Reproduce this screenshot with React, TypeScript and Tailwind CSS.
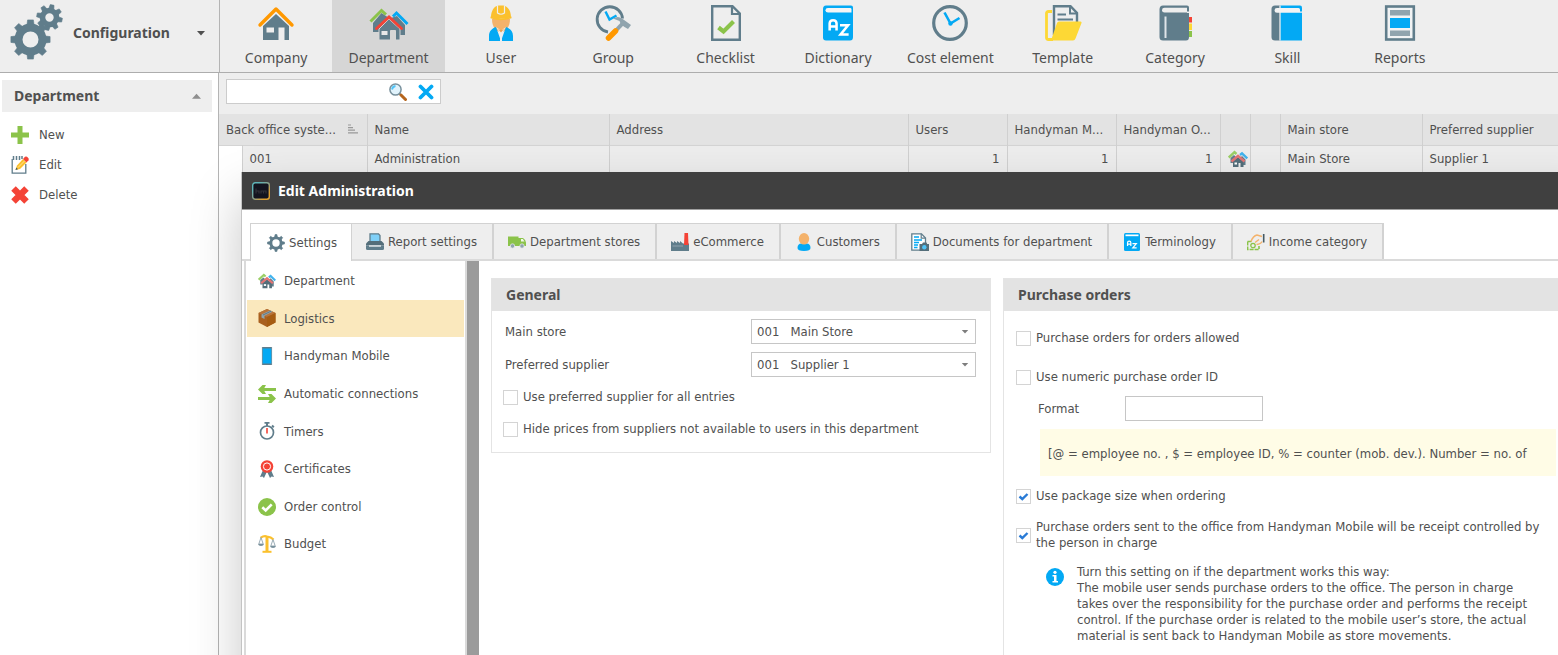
import { ComponentType, ReactNode } from 'react'

interface IconProps {
  className?: string
}

interface NavItem {
  label: string
  Icon: ComponentType<IconProps>
}

const SLATE = '#607d8b'
const BLUE = '#03a9f4'
const GREEN = '#8bc34a'
const RED = '#f44336'
const ORANGE = '#ff9800'
const YELLOW = '#fdd835'

/* ---------- icons ---------- */

interface GearProps {
  cx: number
  cy: number
  body: number
  tooth: number
  hole: number
  width: number
  turn?: number
}

const Gear = ({ cx, cy, body, tooth, hole, width, turn = 0 }: GearProps) => {
  const ring = (body + hole) / 2
  return (
    <g>
      <circle cx={cx} cy={cy} r={ring} fill="none" stroke={SLATE} strokeWidth={body - hole} />
      {[0, 45, 90, 135, 180, 225, 270, 315].map((a) => (
        <path
          key={a}
          d={`M${cx - width / 2} ${cy - body + 1} L${cx - width / 2 + 0.6} ${cy - tooth} H${
            cx + width / 2 - 0.6
          } L${cx + width / 2} ${cy - body + 1}Z`}
          fill={SLATE}
          stroke={SLATE}
          strokeWidth="0.6"
          strokeLinejoin="round"
          transform={`rotate(${a + turn} ${cx} ${cy})`}
        />
      ))}
    </g>
  )
}

const GearsIcon = ({ className }: IconProps) => (
  <svg viewBox="0 0 54 58" className={className} aria-hidden="true">
    <Gear cx={20.5} cy={35.5} body={16} tooth={19.6} hole={8} width={7} />
    <Gear cx={39.5} cy={13.5} body={9.8} tooth={12.8} hole={4.2} width={5} turn={12} />
  </svg>
)

const CogIcon = ({ className }: IconProps) => (
  <svg viewBox="0 0 18 18" className={className} aria-hidden="true">
    <Gear cx={9} cy={9} body={6.6} tooth={8.5} hole={3.7} width={3} />
  </svg>
)

const HouseIcon = ({ className }: IconProps) => (
  <svg viewBox="0 0 36 36" className={className} aria-hidden="true">
    <path d="M18 9 L31 21 V35 H26.5 V22.500 H20.500 V35 H5 V21Z" fill={SLATE} />
    <rect x="8.500" y="22.500" width="7.500" height="5" fill="#eeeeee" />
    <path d="M2 20 L18 4 L34 20" fill="none" stroke={ORANGE} strokeWidth="3.400" strokeLinejoin="round" strokeLinecap="round" />
  </svg>
)

const HousesIcon = ({ className }: IconProps) => (
  <svg viewBox="0 0 40 36" className={className} aria-hidden="true">
    <path d="M12.500 8 L20 13 L12 22 V27 H4 V18Z" fill={SLATE} />
    <path d="M28 11 L36 20 V30 H29 V23 L22 13Z" fill={SLATE} />
    <path d="M1.500 16.500 L12.500 5.500 L17 9.500" fill="none" stroke={GREEN} strokeWidth="3" />
    <path d="M24 11.500 L27.500 8 L38.500 19" fill="none" stroke={BLUE} strokeWidth="3" />
    <path d="M20 14 L31 24 V35 H26.500 V25.500 H21.500 V35 H10 V24Z" fill={SLATE} stroke="#d6d6d6" strokeWidth="1" />
    <rect x="12.500" y="26" width="6" height="4" fill="#e8e8e8" />
    <path d="M7.500 23.500 L20 12 L32.500 23.500" fill="none" stroke={RED} strokeWidth="2.800" strokeLinecap="round" />
  </svg>
)

const SmallHousesIcon = ({ className }: IconProps) => (
  <svg viewBox="0 0 20 18" className={className} aria-hidden="true">
    <path d="M6 5 L9 8 L5 13 H2.500 V8Z M14 6 L17.500 9.500 V15 H15 L12 8Z" fill={SLATE} />
    <path d="M.8 7.500 L6.500 2.200 L8.500 4" fill="none" stroke="#9bcf66" strokeWidth="2.400" />
    <path d="M12 5 L14 3.400 L19.200 8.500" fill="none" stroke="#42b3ee" strokeWidth="2.400" />
    <path d="M10 7 L15.500 12 V17 H12.500 V13 H10.500 V17 H5 V12Z" fill="#546e7a" />
    <rect x="6.500" y="12.500" width="2.500" height="2" fill="#fff" />
    <path d="M3.500 11.500 L10 5.800 L16.500 11.500" fill="none" stroke="#e57373" strokeWidth="2.400" />
  </svg>
)

const WorkerIcon = ({ className }: IconProps) => (
  <svg viewBox="0 0 36 36" className={className} aria-hidden="true">
    <path d="M9 14 C9 23 14 27 18 27 C22 27 27 23 27 14Z" fill="#f4b26b" />
    <path d="M6 36 V31 C6 26 9 23.500 13 22 L18 36Z M30 36 V31 C30 26 27 23.500 23 22 L18 36Z" fill={BLUE} />
    <path d="M13 22 L17 28 V36 H19 V28 L23 22 L18 25.500Z" fill="#eceff1" />
    <path d="M14.500 23.500 C16 25.300 20 25.300 21.500 23.500 L18 27.500Z" fill="#ec9f55" />
    <path d="M8 12.500 C8 5.500 11.500 1.500 14 1 L15.500 0.500 H20.500 L22 1 C25 2 28 6 28 12.500 Q18 14.500 8 12.500Z" fill="#fbc02d" />
    <path d="M14.500 0.500 V8 Q18 10.500 21.500 8 V0.500" fill="none" stroke="#eeeeee" strokeWidth="1.200" />
    <path d="M7.500 11.500 Q18 15 28.500 11.500 V13.300 Q18 17 7.500 13.300Z" fill="#fbc02d" />
  </svg>
)

const ClockHammerIcon = ({ className }: IconProps) => (
  <svg viewBox="0 0 36 36" className={className} aria-hidden="true">
    <path d="M27.500 13.500 A12.700 12.700 0 1 0 13 27" fill="none" stroke={SLATE} strokeWidth="2.800" />
    <path d="M10.500 6.500 L14.500 14.500 L21.500 10.500" fill="none" stroke={BLUE} strokeWidth="2.400" />
    <path d="M29 17 L20.500 26" stroke="#90a4ae" strokeWidth="4" />
    <path d="M18 13.500 Q23 10.500 27 13.500 L36 20 L33 24 L29.500 22 L26 19.500 L24.500 16Z" fill="#90a4ae" />
    <path d="M20.500 26 L13.500 33" stroke={ORANGE} strokeWidth="5.500" strokeLinecap="round" />
  </svg>
)

const ChecklistIcon = ({ className }: IconProps) => (
  <svg viewBox="0 0 36 36" className={className} aria-hidden="true">
    <path d="M4.200 1.200 H24.500 L31.800 8.500 V34.800 H4.200Z" fill="none" stroke={SLATE} strokeWidth="2.400" />
    <path d="M24 1 V9 H32" fill="none" stroke={SLATE} strokeWidth="2.200" />
    <path d="M10.500 22.500 L15.500 26.500 L25.500 16.500" fill="none" stroke={GREEN} strokeWidth="4.200" />
  </svg>
)

const LetterPair = ({ x, y, size }: { x: number; y: number; size: number }) => (
  <g transform={`translate(${x} ${y}) scale(${size})`} fill="none" stroke="#fff" strokeWidth="2.200">
    <path d="M1 10 V4 Q1 1 4 1 Q7 1 7 4 V10 M1 6.500 H7" />
    <path d="M10 5.500 H17 L10.500 13.500 H17.500" />
  </g>
)

const DictionaryIcon = ({ className }: IconProps) => (
  <svg viewBox="0 0 36 36" className={className} aria-hidden="true">
    <path d="M6 0.500 H31 Q33 .5 33 2.500 V32 Q33 35.500 30 35.500 H6 Q3 35.500 3 32.500 V4 Q3 .5 6 .5Z" fill={BLUE} />
    <path d="M8 3 H30.500 Q31.500 3 31.500 4.500 V7.500 H8 Q5.500 7.500 5.500 5.200 Q5.500 3 8 3Z" fill="#f5f5f5" />
    <LetterPair x={8.500} y={14} size={1.150} />
  </svg>
)

const SmallDictionaryIcon = ({ className }: IconProps) => (
  <svg viewBox="0 0 18 18" className={className} aria-hidden="true">
    <rect x="1" y="0" width="16" height="18" rx="1.500" fill={BLUE} />
    <path d="M2.500 1.500 H15.500 V3.200 H2.500Z" fill="#fff" />
    <LetterPair x={4} y={7.500} size={0.550} />
  </svg>
)

const ClockIcon = ({ className }: IconProps) => (
  <svg viewBox="0 0 36 36" className={className} aria-hidden="true">
    <circle cx="18" cy="18" r="16.300" fill="none" stroke={SLATE} strokeWidth="3.200" />
    <path d="M12.500 7.500 L18.500 18.500 L27.500 13" fill="none" stroke={BLUE} strokeWidth="2.600" />
    <circle cx="18.500" cy="18.500" r="2.200" fill={BLUE} />
  </svg>
)

const TemplateIcon = ({ className }: IconProps) => (
  <svg viewBox="0 0 38 36" className={className} aria-hidden="true">
    <path d="M8 6.500 H4.500 Q2.500 6.500 2.500 8.500 V32.500 Q2.500 34.500 4.500 34.500 H9" fill="none" stroke={YELLOW} strokeWidth="2.800" />
    <path d="M10 30 V1.200 H26.500 L33 8 V18" fill="#eeeeee" stroke={SLATE} strokeWidth="2.400" />
    <path d="M26 1 V8.500 H33" fill="none" stroke={SLATE} strokeWidth="2" />
    <path d="M13.500 9.500 H22 M13.500 14.500 H29" stroke={SLATE} strokeWidth="2" />
    <path d="M13 18 Q13.500 16.500 15 16.500 H36.500 Q38 16.500 37.500 18 L31.500 33.500 Q30.800 35.500 29 35.500 H7Z" fill={YELLOW} />
  </svg>
)

const CategoryIcon = ({ className }: IconProps) => (
  <svg viewBox="0 0 36 36" className={className} aria-hidden="true">
    <path d="M31 12 H35 V17.500 H31Z" fill={RED} />
    <path d="M31 18.500 H35 V25 H31Z" fill="#fdd835" />
    <path d="M31 26 H35 V32 H31Z" fill={GREEN} />
    <path d="M6 .5 H30 Q32 .5 32 2.500 V32 Q32 35.500 29 35.500 H6 Q2.500 35.500 2.500 32 V4.500 Q2.500 .5 6 .5Z" fill={SLATE} />
    <path d="M7.500 2.800 H30 V7.500 H7.500 Q5 7.500 5 5.200 Q5 2.800 7.500 2.800Z" fill="#eeeeee" />
    <path d="M30 6.500 H33 V8 H30Z" fill="#eeeeee" />
    <path d="M7.500 11.500 H9.500 V33 H7.500Z" fill="#dfe5e8" />
  </svg>
)

const SkillIcon = ({ className }: IconProps) => (
  <svg viewBox="0 0 36 36" className={className} aria-hidden="true">
    <path d="M11 .5 H31 Q33 .5 33 2.500 V35.500 H11Z" fill={BLUE} />
    <path d="M11 .5 V35.500 H6 Q2.500 35.500 2.500 32 V4 Q2.500 .5 6 .5Z" fill={SLATE} />
    <path d="M11 .5 V35.500" stroke="#eeeeee" strokeWidth="1.300" />
    <path d="M8 3 H29.500 Q31 3 31 4.500 V6.500 H33 V7.800 H8 Q5.500 7.800 5.500 5.400 Q5.500 3 8 3Z" fill="#f3f3f3" />
  </svg>
)

const ReportsIcon = ({ className }: IconProps) => (
  <svg viewBox="0 0 36 36" className={className} aria-hidden="true">
    <rect x="4.200" y="1.500" width="27.600" height="33" fill="#f1f3f4" stroke={SLATE} strokeWidth="2.600" />
    <path d="M8 5 H28 V10.500 H8Z M8 25.500 H28 V31 H8Z" fill="#90a4ae" />
    <path d="M8 13 H28 V23 H8Z" fill={BLUE} />
  </svg>
)

const PlusIcon = ({ className }: IconProps) => (
  <svg viewBox="0 0 18 18" className={className} aria-hidden="true">
    <path d="M9 0 V18 M0 9 H18" stroke={GREEN} strokeWidth="5" />
  </svg>
)

const NotepadIcon = ({ className }: IconProps) => (
  <svg viewBox="0 0 18 18" className={className} aria-hidden="true">
    <path d="M1.200 3 V17.200 H14.800 V8" fill="#fff" stroke={SLATE} strokeWidth="1.300" />
    <path d="M2.500 0 V4 M5.500 0 V4 M8.500 0 V4 M11 0 V3" stroke={SLATE} strokeWidth="1.500" />
    <path d="M4.500 14 L6 9.500 L12 3 L15.500 6.500 L9 13Z" fill="#fbc02d" />
    <path d="M4.500 14 L5.300 11.500 L7 13.200Z" fill="#455a64" />
    <path d="M7 11.500 L13.500 5" stroke="#ffe49a" strokeWidth="1" />
    <path d="M12 3 L14 .8 Q15 0 16 .8 L17.500 2.300 Q18 3.300 17.500 4.300 L15.500 6.500Z" fill={RED} />
  </svg>
)

const CrossIcon = ({ className }: IconProps) => (
  <svg viewBox="0 0 18 18" className={className} aria-hidden="true">
    <path d="M2.500 2.500 L15.500 15.500 M15.500 2.500 L2.500 15.500" stroke={RED} strokeWidth="6.400" />
  </svg>
)

const SearchIcon = ({ className }: IconProps) => (
  <svg viewBox="0 0 18 18" className={className} aria-hidden="true">
    <circle cx="6.500" cy="6.500" r="5.600" fill="#e1f3fc" stroke="#78909c" strokeWidth="1.500" />
    <path d="M3 6.500 Q3.500 3.500 6.500 3" fill="none" stroke="#4fc3f7" strokeWidth="1.800" />
    <path d="M10.500 10.500 L12 12" stroke="#78909c" strokeWidth="2" />
    <path d="M12 12 L16.500 16.500" stroke="#b5651d" strokeWidth="3" strokeLinecap="round" />
  </svg>
)

const ClearIcon = ({ className }: IconProps) => (
  <svg viewBox="0 0 16 16" className={className} aria-hidden="true">
    <path d="M2.500 2.500 L13.500 13.500 M13.500 2.500 L2.500 13.500" stroke={BLUE} strokeWidth="3.800" strokeLinecap="round" />
  </svg>
)

const SortIcon = ({ className }: IconProps) => (
  <svg viewBox="0 0 10 10" className={className} aria-hidden="true">
    <path d="M0 1 H3 M0 3.600 H5 M0 6.200 H7 M0 8.800 H10" stroke="#999" strokeWidth="1.200" />
  </svg>
)

const CaretIcon = ({ className }: IconProps) => (
  <svg viewBox="0 0 8 5" className={className} aria-hidden="true">
    <path d="M0 0 H8 L4 4.500Z" fill="currentColor" />
  </svg>
)

const AppIcon = ({ className }: IconProps) => (
  <svg viewBox="0 0 18 18" className={className} aria-hidden="true">
    <defs>
      <linearGradient id="app-frame" x1="0" y1="0" x2="1" y2="1">
        <stop offset="0.2" stopColor="#5fb4b8" />
        <stop offset="0.500" stopColor="#8aa08a" />
        <stop offset="0.800" stopColor="#e0a030" />
      </linearGradient>
    </defs>
    <rect x="0.700" y="0.700" width="16.600" height="16.600" rx="2.500" fill="#14141f" stroke="url(#app-frame)" strokeWidth="1.400" />
    <path d="M4 6.500 V11.500 M4 9 H7 V11.500 M9 11.500 V9 H11.500 V11.500 M11.500 9 H14 V11.500" fill="none" stroke="#33323a" strokeWidth="1.200" />
  </svg>
)

const PrinterIcon = ({ className }: IconProps) => (
  <svg viewBox="0 0 18 18" className={className} aria-hidden="true">
    <path d="M4 9 V.8 H12.500 L14 2.500 V9" fill="#7fd0f8" stroke={SLATE} strokeWidth="1.300" />
    <path d="M2.500 8 H15.500 L18 10.500 V12.500 H0 V10.500Z" fill="#546e7a" />
    <path d="M0 12.500 H18 V15.500 Q18 17 16.500 17 H1.500 Q0 17 0 15.500Z" fill={SLATE} />
    <path d="M3 13 H15" stroke="#fff" strokeWidth="1.200" />
  </svg>
)

const TruckIcon = ({ className }: IconProps) => (
  <svg viewBox="0 0 18 18" className={className} aria-hidden="true">
    <path d="M0 3.500 H10.500 V13 H0Z M10.500 5 H15 Q18 7 18 9.500 V13 H10.500Z" fill={GREEN} />
    <path d="M13 6 H14.800 L16.500 8.500 H13Z" fill="#f1f8e9" />
    <circle cx="4.500" cy="13" r="2.200" fill="#90a4ae" stroke="#eee" strokeWidth="0.700" />
    <circle cx="14" cy="13" r="2.200" fill="#90a4ae" stroke="#eee" strokeWidth="0.700" />
  </svg>
)

const FactoryIcon = ({ className }: IconProps) => (
  <svg viewBox="0 0 18 18" className={className} aria-hidden="true">
    <path d="M0 18 V8 L3 10 V8 L6 10 V8 L9 10 V8 L12 10.500 H18 V18Z" fill={SLATE} />
    <path d="M13.500 0 H17 L17.500 12 H13Z" fill={RED} />
    <path d="M1.500 13 H12" stroke="#90a4ae" strokeWidth="1" />
  </svg>
)

const PersonIcon = ({ className }: IconProps) => (
  <svg viewBox="0 0 18 18" className={className} aria-hidden="true">
    <path d="M2.500 15 Q2.500 10.500 6.500 10.500 H11.500 Q15.500 10.500 15.500 15 Q15.500 18 9 18 Q2.500 18 2.500 15Z" fill={BLUE} />
    <ellipse cx="9" cy="5.800" rx="5.200" ry="5.800" fill="#f4b26b" />
  </svg>
)

const DocumentsIcon = ({ className }: IconProps) => (
  <svg viewBox="0 0 18 18" className={className} aria-hidden="true">
    <path d="M.8 .8 H10.500 L14.500 5 V17.200 H.8Z" fill="#fff" stroke={SLATE} strokeWidth="1.300" />
    <path d="M10.200 .8 V5.200 H14.500" fill="none" stroke={SLATE} strokeWidth="1.200" />
    <path d="M3 4 H8 M3 7 H11 M3 9.500 H8 M3 12 H7 M3 14.500 H6.500" stroke={BLUE} strokeWidth="1.300" />
    <path d="M8.500 11 H11 L12 9.500 H15.500 L16.200 11 H18 V18 H8.500Z" fill="#546e7a" />
    <circle cx="13.300" cy="14.300" r="2.200" fill="#4fc3f7" />
  </svg>
)

const IncomeIcon = ({ className }: IconProps) => (
  <svg viewBox="0 0 18 18" className={className} aria-hidden="true">
    <path d="M.6 8.500 H5 M.6 8.500 V16.500 H12 V13" fill="none" stroke={GREEN} strokeWidth="1.600" strokeDasharray="4 1" />
    <circle cx="6" cy="12.500" r="2.200" fill="none" stroke={GREEN} strokeWidth="1.300" />
    <path d="M4 8.500 Q6 3 10 2 L15 3.500 M8 9.500 L12 6.500 M9.500 11.500 Q14 11 15 8.500" fill="none" stroke="#f4b26b" strokeWidth="1.400" />
    <path d="M16.700 1 V9.500" stroke="#455a64" strokeWidth="1.600" />
  </svg>
)

const BoxIcon = ({ className }: IconProps) => (
  <svg viewBox="0 0 18 18" className={className} aria-hidden="true">
    <path d="M9 0 L17.500 4 V13.500 L9 18 L.5 13.500 V4Z" fill="#a9601f" />
    <path d="M.5 4 L9 8 L17.500 4 L9 0Z" fill="#b9743a" />
    <path d="M9 8 V18 L17.500 13.500 V4Z" fill="#a65c12" />
    <path d="M3.500 5.400 L12 1.500 L14.500 2.700 L6.500 6.700 V10 L3.500 8.500Z" fill="#90a4ae" />
    <path d="M5 6 L13.200 2.100" stroke="#546e7a" strokeWidth="0.800" />
  </svg>
)

const PhoneIcon = ({ className }: IconProps) => (
  <svg viewBox="0 0 18 18" className={className} aria-hidden="true">
    <rect x="4" y="0" width="10" height="18" fill={BLUE} />
    <path d="M4 .8 H14 M4 17.200 H14" stroke={SLATE} strokeWidth="1.600" />
    <path d="M4.400 0 V18 M13.600 0 V18" stroke="#78909c" strokeWidth="0.800" />
  </svg>
)

const SwapIcon = ({ className }: IconProps) => (
  <svg viewBox="0 0 18 18" className={className} aria-hidden="true">
    <path d="M3 4.500 H18 M0 13.500 H15" stroke={GREEN} strokeWidth="3" />
    <path d="M0 4.500 L4.500 0 H8 L5.500 4.500 L8 9 H4.500Z M18 13.500 L13.500 9 H10 L12.500 13.500 L10 18 H13.500Z" fill={GREEN} />
  </svg>
)

const TimerIcon = ({ className }: IconProps) => (
  <svg viewBox="0 0 18 18" className={className} aria-hidden="true">
    <circle cx="9" cy="10.500" r="6.500" fill="#fff" stroke={SLATE} strokeWidth="1.700" />
    <path d="M6.500 .8 H11.500 M9 0 V4 M14 3.500 L15.800 5.300" stroke={SLATE} strokeWidth="2" />
    <path d="M9 6 V11.500" stroke={RED} strokeWidth="1.600" />
  </svg>
)

const RosetteIcon = ({ className }: IconProps) => (
  <svg viewBox="0 0 18 18" className={className} aria-hidden="true">
    <path d="M5 10 L2 17 L4.500 16.500 L6 18 L9 11.500 L12 18 L13.500 16.500 L16 17 L13 10Z" fill={SLATE} />
    <circle cx="9" cy="6.500" r="6.300" fill={RED} />
    <circle cx="9" cy="6.500" r="3.600" fill="none" stroke="#fff" strokeWidth="1" />
  </svg>
)

const CheckCircleIcon = ({ className }: IconProps) => (
  <svg viewBox="0 0 18 18" className={className} aria-hidden="true">
    <circle cx="9" cy="9" r="9" fill={GREEN} />
    <path d="M4.300 9.200 L7.700 12.500 L13.700 6.300" fill="none" stroke="#fff" strokeWidth="2.600" />
  </svg>
)

const ScalesIcon = ({ className }: IconProps) => (
  <svg viewBox="0 0 18 18" className={className} aria-hidden="true">
    <path d="M2.500 2.800 Q6 .5 9 1.500 Q13 2 15.500 4.500" fill="none" stroke="#fbc02d" strokeWidth="2.200" />
    <path d="M9 1.500 V17" stroke="#fbc02d" strokeWidth="3" />
    <path d="M4.500 16.800 H13.500" stroke="#fbc02d" strokeWidth="2" />
    <path d="M3 2.500 L.8 9 H5.200Z M15 4.500 L12.800 11 H17.200Z" fill="#fff" stroke="#90a4ae" strokeWidth="0.900" />
    <path d="M0 9 H6 Q5.500 11 3 11 Q.5 11 0 9Z M12 11 H18 Q17.500 13 15 13 Q12.500 13 12 11Z" fill="#78909c" />
  </svg>
)

const InfoIcon = ({ className }: IconProps) => (
  <svg viewBox="0 0 18 18" className={className} aria-hidden="true">
    <circle cx="9" cy="9" r="9" fill={BLUE} />
    <circle cx="9" cy="4.300" r="1.600" fill="#fff" />
    <path d="M6.500 7 H10.500 V13 H12 V14.500 H6.500 V13 H8 V8.500 H6.500Z" fill="#fff" />
  </svg>
)

/* ---------- data ---------- */

const toolbarItems: NavItem[] = [
  { label: 'Company', Icon: HouseIcon },
  { label: 'Department', Icon: HousesIcon },
  { label: 'User', Icon: WorkerIcon },
  { label: 'Group', Icon: ClockHammerIcon },
  { label: 'Checklist', Icon: ChecklistIcon },
  { label: 'Dictionary', Icon: DictionaryIcon },
  { label: 'Cost element', Icon: ClockIcon },
  { label: 'Template', Icon: TemplateIcon },
  { label: 'Category', Icon: CategoryIcon },
  { label: 'Skill', Icon: SkillIcon },
  { label: 'Reports', Icon: ReportsIcon },
]

const actions: NavItem[] = [
  { label: 'New', Icon: PlusIcon },
  { label: 'Edit', Icon: NotepadIcon },
  { label: 'Delete', Icon: CrossIcon },
]

const tabs: NavItem[] = [
  { label: 'Settings', Icon: CogIcon },
  { label: 'Report settings', Icon: PrinterIcon },
  { label: 'Department stores', Icon: TruckIcon },
  { label: 'eCommerce', Icon: FactoryIcon },
  { label: 'Customers', Icon: PersonIcon },
  { label: 'Documents for department', Icon: DocumentsIcon },
  { label: 'Terminology', Icon: SmallDictionaryIcon },
  { label: 'Income category', Icon: IncomeIcon },
]

const sections: NavItem[] = [
  { label: 'Department', Icon: SmallHousesIcon },
  { label: 'Logistics', Icon: BoxIcon },
  { label: 'Handyman Mobile', Icon: PhoneIcon },
  { label: 'Automatic connections', Icon: SwapIcon },
  { label: 'Timers', Icon: TimerIcon },
  { label: 'Certificates', Icon: RosetteIcon },
  { label: 'Order control', Icon: CheckCircleIcon },
  { label: 'Budget', Icon: ScalesIcon },
]

/* ---------- page parts ---------- */

const TopBar = () => (
  <header className="flex h-[73px] border-b border-[#adadad] bg-[#eeeeee]">
    <button
      type="button"
      className="flex w-[220px] shrink-0 items-center border-r border-[#b4b4b4] pr-[14px] pb-[6px] pl-[10px] font-['Noto_Sans',sans-serif] text-sm font-bold"
    >
      <GearsIcon className="h-[58px] w-[54px]" />
      <span className="ml-[9px] flex-1 text-left">Configuration</span>
      <CaretIcon className="h-[5px] w-2" />
    </button>
    <nav className="grid w-[1236px] shrink-0 grid-cols-11">
      {toolbarItems.map(({ label, Icon }) => (
        <button
          key={label}
          type="button"
          className={`flex flex-col items-center pt-[5px] font-['Noto_Sans',sans-serif] text-sm ${
            label === 'Department' ? 'bg-[#d6d6d6]' : ''
          }`}
        >
          <Icon className="h-9 w-10" />
          <span className="mt-[7px] whitespace-nowrap">{label}</span>
        </button>
      ))}
    </nav>
  </header>
)

const SideBar = () => (
  <aside className="w-[219px] shrink-0 border-r border-[#b4b4b4] bg-white pt-[7px]">
    <button
      type="button"
      className="ml-[2px] flex h-8 w-[210px] items-center bg-[#eeeeee] pr-[11px] pl-3 font-['Noto_Sans',sans-serif] text-sm font-bold"
    >
      <span className="flex-1 text-left">Department</span>
      <CaretIcon className="h-[6px] w-[9px] rotate-180 text-[#8e8e8e]" />
    </button>
    <ul className="mt-2">
      {actions.map(({ label, Icon }) => (
        <li key={label}>
          <button type="button" className="flex h-[30px] items-center gap-[10px] pl-[11px]">
            <Icon className="h-[18px] w-[18px]" />
            {label}
          </button>
        </li>
      ))}
    </ul>
  </aside>
)

const HeadCell = ({ children, colSpan }: { children?: ReactNode; colSpan?: number }) => (
  <th colSpan={colSpan} scope="col" className="truncate border-r border-[#d0d0d0] px-[7px] text-left font-normal last:border-r-0">
    {children}
  </th>
)

const Cell = ({ children, right }: { children?: ReactNode; right?: boolean }) => (
  <td className={`border-r border-[#d0d0d0] px-[7px] last:border-r-0 ${right ? 'text-right' : ''}`}>{children}</td>
)

const DepartmentTable = () => (
  <table className="w-full table-fixed border-collapse">
    <colgroup>
      <col className="w-[23px]" />
      <col className="w-[125px]" />
      <col className="w-[242px]" />
      <col className="w-[299px]" />
      <col className="w-[99px]" />
      <col className="w-[109px]" />
      <col className="w-[104px]" />
      <col className="w-[30px]" />
      <col className="w-[30px]" />
      <col className="w-[142px]" />
      <col />
    </colgroup>
    <thead>
      <tr className="h-[31px] border-b border-[#d4d4d4] bg-[#e3e3e3]">
        <HeadCell colSpan={2}>
          <span className="flex items-center gap-3">
            Back office syste...
            <SortIcon className="h-[10px] w-[10px]" />
          </span>
        </HeadCell>
        <HeadCell>Name</HeadCell>
        <HeadCell>Address</HeadCell>
        <HeadCell>Users</HeadCell>
        <HeadCell>Handyman M...</HeadCell>
        <HeadCell>Handyman O...</HeadCell>
        <HeadCell />
        <HeadCell />
        <HeadCell>Main store</HeadCell>
        <HeadCell>Preferred supplier</HeadCell>
      </tr>
    </thead>
    <tbody>
      <tr className="h-[27px] bg-[#ededed]">
        <td className="border-r border-[#d0d0d0] bg-white" />
        <Cell>001</Cell>
        <Cell>Administration</Cell>
        <Cell />
        <Cell right>1</Cell>
        <Cell right>1</Cell>
        <Cell right>1</Cell>
        <Cell>
          <SmallHousesIcon className="h-[18px] w-5" />
        </Cell>
        <Cell />
        <Cell>Main Store</Cell>
        <Cell>Supplier 1</Cell>
      </tr>
    </tbody>
  </table>
)

const Panel = ({ title, className, children }: { title: string; className: string; children: ReactNode }) => (
  <section className={`border border-[#e4e4e4] ${className}`}>
    <h2 className="flex h-8 items-center bg-[#e3e3e3] px-[14px] font-['Noto_Sans',sans-serif] text-sm font-bold">
      {title}
    </h2>
    {children}
  </section>
)

const CheckField = ({ label, checked, className }: { label: string; checked?: boolean; className: string }) => (
  <label className={`flex items-center gap-[5px] leading-4 ${className}`}>
    <span className="relative h-[15px] w-[15px] shrink-0">
      <input
        type="checkbox"
        defaultChecked={checked}
        className="peer block h-[15px] w-[15px] appearance-none border border-[#d4d4d4] bg-white"
      />
      <svg viewBox="0 0 15 15" className="pointer-events-none absolute inset-0 hidden peer-checked:block" aria-hidden="true">
        <path d="M3.500 7.500 L6.300 10 L11.500 5" fill="none" stroke="#2a7bd6" strokeWidth="2.400" />
      </svg>
    </span>
    {label}
  </label>
)

const SelectField = ({ id, label, value }: { id: string; label: string; value: string }) => (
  <div className="flex h-[25px] items-center justify-between">
    <label htmlFor={id}>{label}</label>
    <span className="relative w-[225px]">
      <select
        id={id}
        defaultValue={value}
        className="block h-[25px] w-full appearance-none border border-[#c6c6c6] bg-white pl-[5px] whitespace-pre"
      >
        <option value={value}>{value}</option>
      </select>
      <CaretIcon className="pointer-events-none absolute top-[11px] right-[7px] h-1 w-2 text-[#7d7d7d]" />
    </span>
  </div>
)

const GeneralPanel = () => (
  <Panel title="General" className="h-[175px] w-[500px] shrink-0">
    <div className="flex flex-col gap-2 pt-2 pr-[14px] pl-[13px]">
      <SelectField id="main-store" label="Main store" value={'001\u00a0\u00a0\u00a0Main Store'} />
      <SelectField id="preferred-supplier" label="Preferred supplier" value={'001\u00a0\u00a0\u00a0Supplier 1'} />
      <CheckField className="-ml-[2px] h-6" label="Use preferred supplier for all entries" />
      <CheckField className="-ml-[2px] h-6" label="Hide prices from suppliers not available to users in this department" />
    </div>
  </Panel>
)

const PurchasePanel = () => (
  <Panel title="Purchase orders" className="min-w-0 flex-1 border-r-0 border-b-0">
    <div className="pl-3">
      <CheckField className="mt-[15px] h-6" label="Purchase orders for orders allowed" />
      <CheckField className="mt-[15px] h-6" label="Use numeric purchase order ID" />
      <div className="mt-[7px] flex h-[25px] items-center pl-[22px]">
        <label htmlFor="id-format" className="w-[87px]">
          Format
        </label>
        <input id="id-format" type="text" className="h-[25px] w-[138px] border border-[#c6c6c6] px-[6px]" />
      </div>
      <p className="mt-2 mr-[2px] ml-6 flex h-[47px] items-center overflow-hidden bg-[#fffce6] pt-[3px] pl-2 whitespace-nowrap">
        [@ = employee no. , $ = employee ID, % = counter (mob. dev.). Number = no. of
      </p>
      <CheckField className="mt-2 h-6" checked label="Use package size when ordering" />
      <CheckField
        className="mt-[11px] h-8"
        checked
        label="Purchase orders sent to the office from Handyman Mobile will be receipt controlled by the person in charge"
      />
      <div className="mt-[13px] flex gap-[13px] pl-[30px] leading-4">
        <InfoIcon className="mt-1 h-[18px] w-[18px] shrink-0" />
        <p className="max-w-[460px]">
          Turn this setting on if the department works this way:
          <br />
          The mobile user sends purchase orders to the office. The person in charge takes over the responsibility for the
          purchase order and performs the receipt control. If the purchase order is related to the mobile user’s store,
          the actual material is sent back to Handyman Mobile as store movements.
        </p>
      </div>
    </div>
  </Panel>
)

const TabBar = () => (
  <div role="tablist" className="mt-[13px] flex h-[38px] items-end border-b-2 border-[#dadada] pl-2">
    {tabs.map(({ label, Icon }) => (
      <button
        key={label}
        type="button"
        role="tab"
        aria-selected={label === 'Settings'}
        className={`flex items-center gap-1 border-[#d2d2d2] whitespace-nowrap ${
          label === 'Settings'
            ? '-mb-[2px] h-[38px] border-x border-t bg-white pr-[14px] pl-4'
            : 'h-9 border-t border-r-2 bg-[#eeeeee] pr-[15px] pl-[14px]'
        }`}
      >
        <Icon className="h-[18px] w-[18px]" />
        {label}
      </button>
    ))}
  </div>
)

const EditDialog = () => (
  <div
    role="dialog"
    aria-labelledby="dialog-title"
    className="absolute top-[99px] right-0 bottom-0 left-[22px] flex flex-col overflow-hidden border-l border-[#c4c4c4] bg-white"
  >
    <div className="flex h-[38px] shrink-0 items-center gap-2 border-b border-[#a0a0a0] bg-[#404040] pl-[10px] text-white">
      <AppIcon className="h-[18px] w-[18px]" />
      <h1 id="dialog-title" className="font-['Noto_Sans',sans-serif] text-sm font-bold">
        Edit Administration
      </h1>
    </div>
    <TabBar />
    <div className="flex min-h-0 flex-1 pl-[2px]">
      <nav className="w-[223px] shrink-0 border-x-2 border-[#dadada] pt-px">
        <ul className="grid h-[301px] grid-rows-8">
          {sections.map(({ label, Icon }) => (
            <li key={label} className="px-[1px]">
              <button
                type="button"
                className={`flex h-full w-full items-center gap-2 pl-[11px] ${label === 'Logistics' ? 'bg-[#fae8bd]' : ''}`}
              >
                <Icon className="h-[18px] w-[18px]" />
                {label}
              </button>
            </li>
          ))}
        </ul>
      </nav>
      <div className="w-3 shrink-0 bg-[#9b9b9b]" />
      <div className="flex min-w-0 flex-1 gap-3 pt-[17px] pl-3">
        <GeneralPanel />
        <PurchasePanel />
      </div>
    </div>
  </div>
)

export default function App() {
  return (
    <div className="flex h-screen flex-col overflow-hidden bg-white font-['DejaVu_Sans_Condensed',sans-serif] text-[13px] text-[#505050]">
      <TopBar />
      <div className="flex min-h-0 flex-1">
        <SideBar />
        <main className="relative min-w-0 flex-1">
          <div className="flex h-[41px] items-start bg-[#eeeeee] pt-[6px] pl-[7px]">
            <div className="flex h-[25px] w-[215px] items-center border border-[#cccccc] bg-white">
              <input type="text" aria-label="Search" className="min-w-0 flex-1 px-1 outline-none" />
              <button type="button" aria-label="Search departments" className="mr-[11px]">
                <SearchIcon className="h-[18px] w-[18px]" />
              </button>
              <button type="button" aria-label="Clear search" className="mr-[6px]">
                <ClearIcon className="h-4 w-4" />
              </button>
            </div>
          </div>
          <DepartmentTable />
          {/* soft shadow that the dialog throws on the list and the side bar */}
          <div className="pointer-events-none absolute top-[99px] -right-10 -bottom-10 left-[22px] shadow-[0_24px_48px_rgba(0,0,0,0.22)]" />
          <EditDialog />
        </main>
      </div>
    </div>
  )
}
